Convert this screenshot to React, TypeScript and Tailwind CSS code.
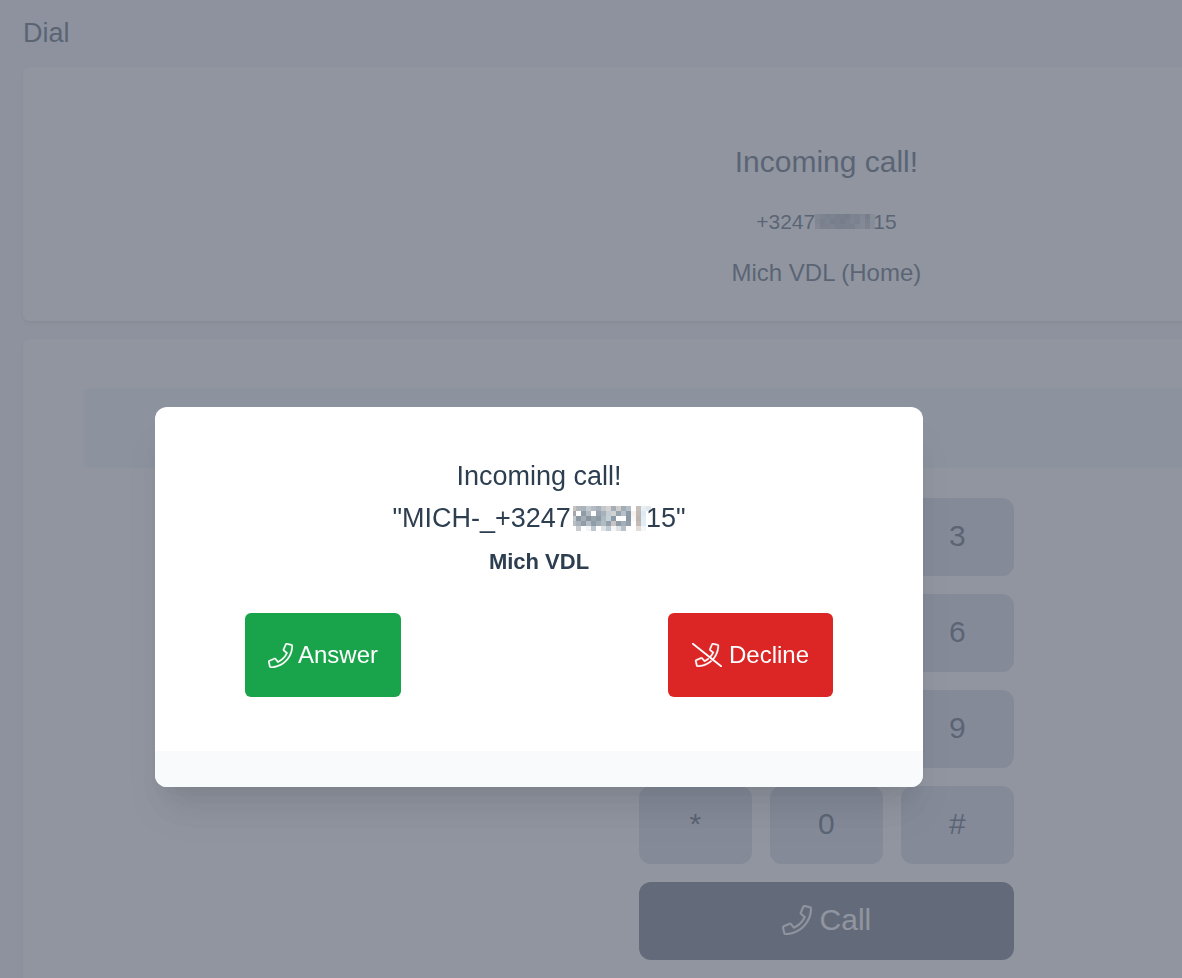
import React from "react";

const PHONE_PATH =
  "M487.8 24.1L387 .8c-14.7-3.4-29.8 4.2-35.8 18.1l-46.5 108.5c-5.5 12.7-1.8 27.7 8.9 36.5l53.9 44.1c-34 69.2-90.3 125.6-159.6 159.6l-44.1-53.9c-8.8-10.7-23.8-14.4-36.5-8.9L18.9 351.3C5 357.3-2.6 372.3.8 387L24 487.7C27.3 502 39.9 512 54.5 512 306.7 512 512 307.8 512 54.5c0-14.6-10-27.2-24.2-30.4zM55.1 480l-23-99.6 107.4-46 59.5 72.8c103.6-48.6 159.7-104.9 208.1-208.1l-72.8-59.5 46-107.4 99.6 23C479.7 289.7 289.6 479.7 55.1 480z";

function PhoneIcon({ className }: { className: string }) {
  return (
    <svg
      viewBox="0 0 512 512"
      fill="currentColor"
      stroke="currentColor"
      strokeWidth="4"
      aria-hidden="true"
      className={className}
    >
      <path d={PHONE_PATH} />
    </svg>
  );
}

function PhoneSlashIcon({ className }: { className: string }) {
  return (
    <svg viewBox="0 0 640 512" fill="currentColor" stroke="currentColor" aria-hidden="true" className={className}>
      <mask id="slash-gap">
        <rect width="640" height="512" fill="white" stroke="none" />
        <path d="M-6 30L606 516" stroke="black" strokeWidth="18" />
      </mask>
      <g mask="url(#slash-gap)">
        <path d={PHONE_PATH} transform="translate(64 0)" strokeWidth="6" />
      </g>
      <path d="M18 15L622 497" strokeWidth="38" strokeLinecap="round" />
    </svg>
  );
}

const LIGHT_MOSAIC: string[][] = [
  ["#c8c4c2", "#b3b6b9", "#a9b4be", "#c3cad0", "#b3bcc4", "#aab0b8", "#c0c8cd", "#d5d2cf", "#a3afb8", "#cfccca", "#a3adb6", "#b3bec7", "#ffffff", "#c8bfba", "#e6f0f7", "#e4e8eb"],
  ["#a4a8ac", "#ffffff", "#8f9ba6", "#b0b9c0", "#ffffff", "#98a5b0", "#a7b1ba", "#c4cbd1", "#cfd3d6", "#98a4ae", "#b5c1ca", "#8e9ba6", "#f6f2ef", "#c4b9b5", "#dceaf5", "#ffffff"],
  ["#c3c8cc", "#8b98a4", "#a4adb5", "#8795a1", "#98a3ac", "#8b9aa6", "#aeb8c0", "#c4d0d8", "#8a9ba9", "#ffffff", "#ffffff", "#8b99a5", "#f8f8f8", "#c0b6b1", "#e1eef8", "#ffffff"],
  ["#b8bdc1", "#a9b2ba", "#8f9da8", "#b5bdc4", "#8f9da8", "#a1adb6", "#b0bbc3", "#93a1ac", "#c9c4c1", "#8d9ca7", "#a3afb8", "#929fab", "#ffffff", "#c5bcb8", "#e1eef8", "#ffffff"],
  ["#ffffff", "#c8cdd1", "#ffffff", "#f3f5f6", "#bec8cf", "#ffffff", "#dfe3e6", "#c0c9d0", "#f3f5f6", "#dde1e4", "#b8c1c8", "#ffffff", "#ffffff", "#e4dcd7", "#f1f7fb", "#ffffff"],
];

const GRAY_MOSAIC: string[][] = [
  ["#c3c9d0", "#b9bdc6", "#a9afb8", "#b1b7c0", "#a5abb4", "#a2a8b2", "#9ca2ac", "#b2b9c1", "#b0b3ba", "#c4c8cf", "#9a9fa9", "#dbe2e8"],
  ["#c1c3c8", "#a6acb6", "#b5bac2", "#9ea4af", "#a7adb7", "#98a0ab", "#abb2bc", "#b8bac0", "#a9b1bb", "#cbd4db", "#b0b0b6", "#d5dfe6"],
  ["#cccccf", "#b0aeb4", "#b0b5be", "#b8bcc4", "#a6acb7", "#a6adb7", "#abb2bc", "#b2b1b7", "#c1c6cd", "#c8d4dc", "#b6b4b8", "#d5dfe6"],
];

// The first column can be narrowed so that it stays clear of the digit before it.
function Mosaic({ cells, firstInset = 0, className }: { cells: string[][]; firstInset?: number; className: string }) {
  return (
    <svg aria-hidden="true" shapeRendering="crispEdges" className={className}>
      {cells.map((row, r) =>
        row.map((fill, c) => {
          const inset = c === 0 ? firstInset : 0;
          return <rect key={`${r}-${c}`} x={c * 5 + inset} y={r * 5} width={5 - inset} height="5" fill={fill} />;
        })
      )}
    </svg>
  );
}

const KEYS = ["1", "2", "3", "4", "5", "6", "7", "8", "9", "*", "0", "#"];

export default function App() {
  return (
    <div className="h-screen overflow-hidden bg-[#f3f4f6] font-['Liberation_Sans',Arial,sans-serif] text-[#2c3e50]">
      <main className="flex w-[140vw] flex-col pt-3 pr-[25px] pl-[23px]">
        <h1 className="text-[27px] leading-[42px]">Dial</h1>

        <section className="mt-[13px] flex flex-col items-center rounded-md bg-white pt-[72px] pb-[30px] text-center shadow-[0_2px_4px_rgba(0,0,0,0.1),0_1px_2px_rgba(0,0,0,0.06)]">
          <h2 className="text-[30px] leading-[46px]">Incoming call!</h2>
          <p className="mt-4 flex items-center text-[21px] leading-[42px]">
            +3247
            <Mosaic cells={GRAY_MOSAIC} className="h-4 w-[58px] overflow-visible" />
            15
          </p>
          <p className="mt-3 text-2xl leading-9">Mich VDL (Home)</p>
        </section>

        <section className="mt-[18px] flex flex-col items-center rounded-md bg-white px-[60px] pt-[49px] pb-[60px] shadow-[0_2px_4px_rgba(0,0,0,0.1),0_1px_2px_rgba(0,0,0,0.06)]">
          <input
            type="tel"
            aria-label="Number to dial"
            className="h-20 w-full rounded-md bg-[#edf2f7] text-center text-[30px] outline-none"
          />
          <div className="mt-[30px] grid w-[375px] grid-cols-3 gap-[18px]">
            {KEYS.map((key) => (
              <button key={key} type="button" className="h-[78px] rounded-xl bg-[#cfd2df] pb-[3px] text-[30px]">
                {key}
              </button>
            ))}
            <button
              type="button"
              className="col-span-3 flex h-[78px] items-center justify-center gap-2 rounded-xl bg-[#4b5563] pb-[3px] text-[30px] text-white"
            >
              <PhoneIcon className="size-[30px]" />
              Call
            </button>
          </div>
        </section>
      </main>

      <div className="fixed inset-0 flex items-start justify-center bg-[#6b7280]/75 pt-[407px] pr-[104px]">
        <div
          role="dialog"
          aria-modal="true"
          aria-labelledby="incoming-title"
          className="w-full max-w-3xl overflow-hidden rounded-xl bg-white shadow-[0_30px_38px_-8px_rgba(0,0,0,0.1),0_15px_15px_-8px_rgba(0,0,0,0.04)]"
        >
          <div className="px-[90px] pt-12 pb-[54px] text-center">
            <h2 id="incoming-title" className="text-[27px] leading-[42px]">
              Incoming call!
            </h2>
            <p className="flex items-center justify-center text-[27px] leading-[42px]">
              "MICH-_+3247
              <Mosaic cells={LIGHT_MOSAIC} firstInset={2} className="h-[25px] w-[75px] overflow-visible" />
              15"
            </p>
            <p className="mt-[5px] text-[22px] leading-9 font-bold">Mich VDL</p>
            <div className="mt-[33px] flex justify-between">
              <button
                type="button"
                className="flex h-[84px] items-center gap-[5px] rounded-md bg-[#19a34a] px-[23px] text-2xl text-white"
              >
                <PhoneIcon className="size-[25px]" />
                Answer
              </button>
              <button
                type="button"
                className="flex h-[84px] items-center gap-[7px] rounded-md bg-[#dc2626] px-6 text-2xl text-white"
              >
                <PhoneSlashIcon className="h-6 w-[30px]" />
                Decline
              </button>
            </div>
          </div>
          <div className="h-9 bg-[#f9fafc]" />
        </div>
      </div>
    </div>
  );
}
